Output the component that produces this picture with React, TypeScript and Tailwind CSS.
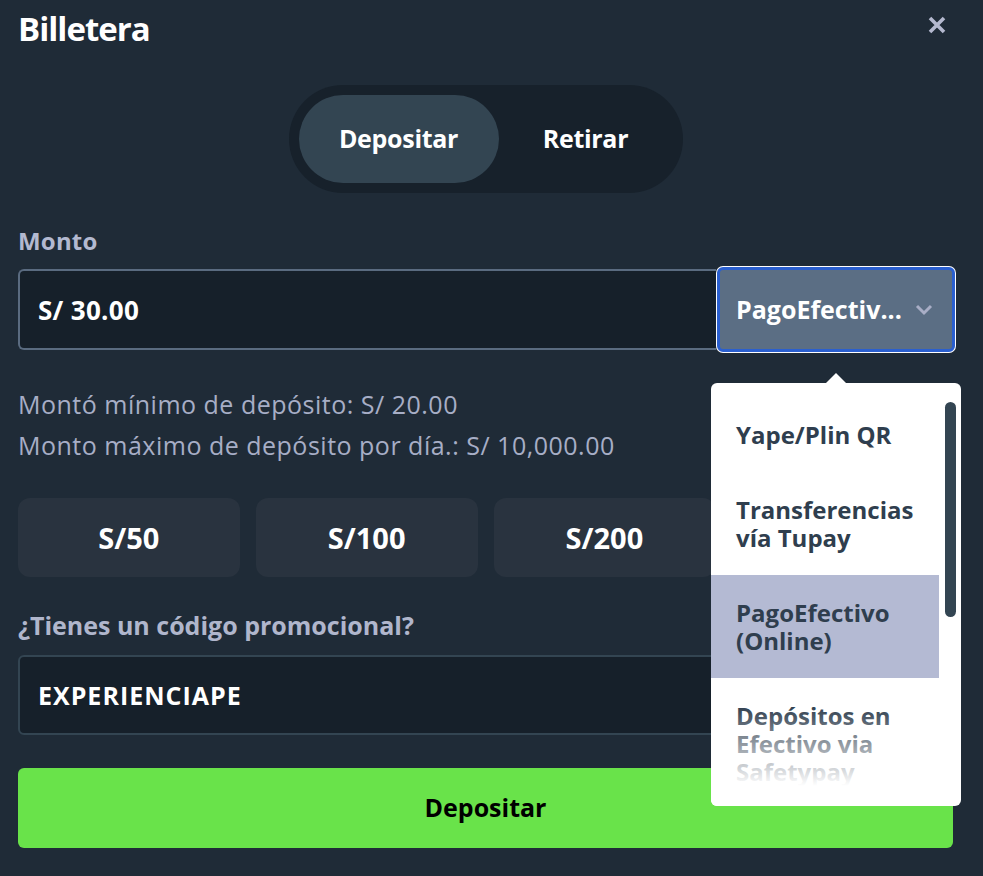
import { useState } from 'react';

const quickAmounts = ['S/50', 'S/100', 'S/200', 'S/500'];

const metodos = [
    { id: 'yape', label: 'Yape/Plin QR' },
    { id: 'tupay', label: 'Transferencias vía Tupay' },
    { id: 'pagoefectivo', label: 'PagoEfectivo (Online)' },
    { id: 'safetypay', label: 'Depósitos en Efectivo via Safetypay' },
];

export default function App() {
    const [tab, setTab] = useState<'depositar' | 'retirar'>('depositar');
    const [monto, setMonto] = useState('S/ 30.00');
    const [codigo, setCodigo] = useState('EXPERIENCIAPE');
    const [metodo, setMetodo] = useState('pagoefectivo');

    return (
        <div className="relative w-full h-[876px] overflow-hidden bg-[#1f2b37] pl-[18px] pr-[30px] font-['Open_Sans','Noto_Sans',sans-serif] text-white">
            <div className="flex items-center justify-between h-[58px]">
                <h1 className="text-[33px] font-bold tracking-[-1px]">Billetera</h1>
                <button className="mr-[6px] -mt-[8px] text-[#b4b9cf]">
                    <svg width="20" height="20" viewBox="0 0 20 20">
                        <path d="M3 3 L17 17 M17 3 L3 17" stroke="currentColor" strokeWidth="3.6" strokeLinecap="butt" />
                    </svg>
                </button>
            </div>

            <div className="flex justify-center mt-[27px]">
                <div className="flex w-[394px] h-[108px] rounded-full bg-[#17212b] p-[10px]">
                    <button
                        onClick={() => setTab('depositar')}
                        className={`w-[200px] h-full rounded-full text-[25px] font-bold tracking-[-0.3px] ${tab === 'depositar' ? 'bg-[#334552]' : ''}`}
                    >
                        Depositar
                    </button>
                    <button
                        onClick={() => setTab('retirar')}
                        className={`flex-1 h-full rounded-full text-[25px] font-bold tracking-[-0.3px] ${tab === 'retirar' ? 'bg-[#334552]' : ''}`}
                    >
                        Retirar
                    </button>
                </div>
            </div>

            <label className="block mt-[34px] text-[24px] font-bold text-[#b3b9d0] leading-[28px] tracking-[0.2px]">Monto</label>

            <div className="flex items-center mt-[11px] -mr-[3px]">
                <input
                    type="text"
                    value={monto}
                    onChange={(e) => setMonto(e.target.value)}
                    className="flex-1 h-[81px] rounded-l-[6px] border-2 border-r-0 border-[#5a6b80] bg-[#16202a] pl-[18px] text-[26px] font-bold tracking-[0.3px] text-white outline-none"
                />
                <div className="w-[240px] h-[87px] rounded-[7px] bg-white p-[1px]">
                    <button className="flex items-center w-full h-full rounded-[6px] border-[3px] border-[#2a5fcf] bg-[#5b6e84] pl-[16px] pr-[19px] text-[25px] font-bold">
                        <span className="flex-1 text-left whitespace-nowrap overflow-hidden">PagoEfectiv...</span>
                        <svg width="18" height="12" viewBox="0 0 18 12" className="ml-[2px] shrink-0 text-[#a9aec6]">
                            <path d="M2 2 L9 9 L16 2" fill="none" stroke="currentColor" strokeWidth="3" />
                        </svg>
                    </button>
                </div>
            </div>

            <div className="mt-[31px] text-[25px] leading-[41px] tracking-[0.5px] text-[#a7aec6]">
                <p>Montó mínimo de depósito: S/ 20.00</p>
                <p>Monto máximo de depósito por día.: S/ 10,000.00</p>
            </div>

            <div className="grid grid-cols-4 gap-[16px] mt-[32px]">
                {quickAmounts.map((a) => (
                    <button
                        key={a}
                        onClick={() => setMonto(`${a.replace('/', '/ ')}.00`)}
                        className="h-[79px] rounded-[12px] bg-[#29333f] text-[29px] font-bold"
                    >
                        {a}
                    </button>
                ))}
            </div>

            <label className="block mt-[34px] text-[25px] font-bold text-[#b0b6cc] leading-[28px]">¿Tienes un código promocional?</label>
            <input
                type="text"
                value={codigo}
                onChange={(e) => setCodigo(e.target.value)}
                className="block w-full h-[80px] mt-[16px] rounded-[6px] border-2 border-[#334552] bg-[#16202a] pl-[18px] text-[25px] font-bold tracking-[1px] text-white outline-none"
            />

            <button className="block w-full h-[80px] mt-[33px] rounded-[6px] bg-[#69e34a] text-[25px] font-bold text-black">
                Depositar
            </button>

            {/* dropdown de métodos */}
            <div className="absolute left-[711px] top-[383px] w-[250px] h-[423px] rounded-[6px] bg-white">
                <div className="absolute -top-[10px] left-[114px] w-0 h-0 border-x-[11px] border-x-transparent border-b-[11px] border-b-white" />
                <div className="h-full overflow-hidden rounded-[6px] pt-[14px] pr-[22px]">
                    {metodos.map((m) => (
                        <button
                            key={m.id}
                            onClick={() => setMetodo(m.id)}
                            className={`block w-full text-left pl-[25px] pr-[6px] py-[23.5px] text-[24px] font-bold leading-[28px] text-[#2f3e4e] ${metodo === m.id ? 'bg-[#b4bad3]' : ''}`}
                        >
                            {m.label}
                        </button>
                    ))}
                </div>
                <div className="absolute left-0 right-[22px] bottom-0 h-[100px] rounded-b-[6px] bg-linear-to-b from-white/0 to-white to-80%" />
                <div className="absolute right-[5px] top-[19px] w-[11px] h-[215px] rounded-full bg-[#334552]" />
            </div>
        </div>
    );
}
